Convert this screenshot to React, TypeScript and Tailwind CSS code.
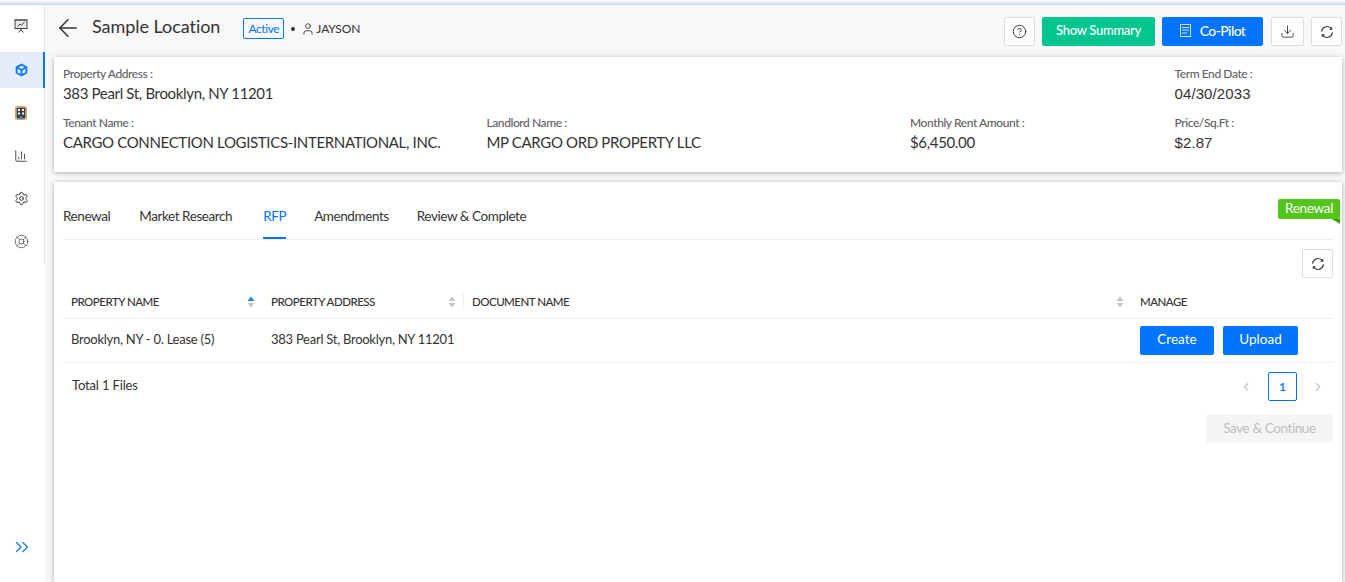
import { ArrowLeft, BarChart3, ChevronLeft, ChevronRight, ChevronsRight, CircleHelp, Download, LifeBuoy, Settings, User } from 'lucide-react'

function Field({ label, value, arial }: { label: string; value: string; arial?: boolean }) {
  return (
    <div>
      <div className="text-[12px] leading-[16px] font-medium tracking-[-0.42px] text-[#5f5f66]">{label}</div>
      <div className={`mt-[1px] text-[15px] leading-[20px] text-[#333] ${arial ? "translate-y-px font-['Liberation_Sans',sans-serif] tracking-[0.1px]" : 'tracking-[-0.34px]'}`}>{value}</div>
    </div>
  )
}

function IconBox({ children, className }: { children: React.ReactNode; className: string }) {
  return <button className={`flex h-[29px] items-center justify-center rounded-[2px] border border-[#ddd] bg-white text-[#333] ${className}`}>{children}</button>
}

function SortIcon({ active }: { active?: boolean }) {
  return (
    <svg width="8" height="12" viewBox="0 0 8 12" className="shrink-0">
      <path d="M4 0.5 L7.5 5 H0.5 Z" fill={active ? '#1a86f0' : '#c4c4c4'} />
      <path d="M4 11.5 L7.5 7 H0.5 Z" fill="#c4c4c4" />
    </svg>
  )
}

function SyncIcon() {
  return (
    <svg width="14" height="14" viewBox="0 0 14 14" fill="none" stroke="#333" strokeWidth="1.1">
      <path d="M1.6 6.6A5.4 5.4 0 0 1 10.8 3.2" />
      <path d="M12.4 7.4A5.4 5.4 0 0 1 3.2 10.8" />
      <path d="M12.2 1.6V4.8H9Z" fill="#333" stroke="none" />
      <path d="M1.8 12.4V9.2H5Z" fill="#333" stroke="none" />
    </svg>
  )
}

function Sidebar() {
  return (
    <aside className="flex w-[45px] shrink-0 flex-col bg-white">
      <div className="flex h-[259px] flex-col border-r border-[#e8e8e8] pr-[2px]">
        <div className="flex h-[47px] items-center justify-center pb-[5px] text-[#444]">
          <svg width="14" height="14" viewBox="0 0 14 14" fill="none" stroke="#444" strokeWidth="1">
            <rect x="1" y="1" width="12" height="8.5" fill="#e9e9e9" />
            <path d="M0.5 1H13.5M3.5 7.5L6 5L7.5 6.2L10.5 3" />
            <path d="M7 9.5V11.5M7 11L4.5 13.5M7 11L9.5 13.5" />
          </svg>
        </div>
        <div className="-mr-[3px] flex h-[36px] items-center justify-center border-r-2 border-[#0073ff] bg-[#e3ecf8] pr-[1px] text-[#0f7cf5]">
          <svg width="13" height="14" viewBox="0 0 14 14" fill="none" stroke="currentColor" strokeWidth="2">
            <path d="M7 1.2 L12.3 4 V10 L7 12.8 L1.7 10 V4 Z M1.7 4 L7 7 L12.3 4 M7 7 V12.8" />
          </svg>
        </div>
        <div className="mt-[3px] flex h-[43px] items-center justify-center">
          <svg width="12" height="14" viewBox="0 0 12 14">
            <rect x="0.5" y="0.5" width="11" height="13" rx="1" fill="#f7f7f7" stroke="#e0a15a" />
            <rect x="1.5" y="1.5" width="9" height="11" fill="#3a3a3a" />
            <path d="M3 3h2v2H3zM7 3h2v2H7zM3 6.5h2v2H3zM7 6.5h2v2H7z" fill="#fff" />
            <rect x="4.5" y="10" width="3" height="3" fill="#2b7de0" />
          </svg>
        </div>
        <div className="flex h-[43px] items-center justify-center text-[#444]">
          <BarChart3 size={14} strokeWidth={1.6} />
        </div>
        <div className="flex h-[43px] items-center justify-center text-[#333]">
          <Settings size={15} strokeWidth={1.6} />
        </div>
        <div className="flex h-[43px] items-center justify-center text-[#555]">
          <LifeBuoy size={15} strokeWidth={1.3} />
        </div>
      </div>
      <div className="mt-auto flex h-[46px] items-start justify-center pr-[1px] text-[#1f7fe8]">
        <ChevronsRight size={22} strokeWidth={1.5} />
      </div>
    </aside>
  )
}

export default function App() {
  return (
    <div className="flex h-[582px] w-[1345px] flex-col overflow-hidden bg-[#f8f8f8] font-['Lato',sans-serif] text-[#333]">
      <div className="h-[5px] shrink-0 bg-gradient-to-b from-[#ffffff] to-[#c9d4e8]" />
      <div className="flex min-h-0 flex-1">
        <Sidebar />
        <main className="flex min-w-0 flex-1 flex-col pl-[9px]">
          <header className="flex h-[52px] shrink-0 items-start pr-[3px]">
            <ArrowLeft size={28} strokeWidth={1.3} className="mt-[9px] text-[#333]" />
            <h1 className="mt-[9px] ml-[10px] text-[18px] leading-[24px] tracking-[-0.05px]">Sample Location</h1>
            <span className="mt-[13px] ml-[23px] flex h-[21px] w-[41px] items-center justify-center rounded-[2px] border border-[#0073ff] text-[12px] tracking-[-0.4px] text-[#0073ff]">Active</span>
            <span className="mt-[22px] ml-[7px] h-[4px] w-[4px] rounded-full bg-[#333]" />
            <User size={14} strokeWidth={1.5} className="mt-[17px] ml-[6px]" />
            <span className="mt-[15px] ml-[1px] text-[12px] leading-[18px] tracking-[-0.15px]">JAYSON</span>
            <div className="mt-[12px] ml-auto flex items-center">
              <IconBox className="w-[31px]"><CircleHelp size={15} strokeWidth={1.5} /></IconBox>
              <button className="ml-[7px] h-[29px] w-[113px] rounded-[2px] bg-[#00c58f] pb-[2px] text-[13px] font-medium tracking-[-0.3px] text-white">Show Summary</button>
              <button className="ml-[7px] flex h-[29px] w-[101px] items-center justify-center gap-[9px] rounded-[2px] bg-[#0073ff] pb-[2px] text-[14px] font-medium tracking-[-0.6px] text-white">
                <svg width="11" height="13" viewBox="0 0 11 13" fill="none" stroke="#cfe3ff" strokeWidth="1">
                  <rect x="0.5" y="0.5" width="10" height="12" />
                  <path d="M2 3.5h7M2 6h7M2 9h5" />
                </svg>
                Co-Pilot
              </button>
              <IconBox className="ml-[8px] w-[33px]"><Download size={15} strokeWidth={1.4} /></IconBox>
              <IconBox className="ml-[7px] w-[31px]"><SyncIcon /></IconBox>
            </div>
          </header>

          <section className="mr-[3px] grid h-[115px] shrink-0 grid-cols-[423.5px_423.5px_264.5px_1fr] content-start gap-y-[12px] bg-white px-[9px] pt-[9px] shadow-[0_1px_5px_rgba(0,0,0,0.3)]">
            <div className="col-span-3"><Field label="Property Address :" value="383 Pearl St, Brooklyn, NY 11201" /></div>
            <Field label="Term End Date :" value="04/30/2033" arial />
            <Field label="Tenant Name :" value="CARGO CONNECTION LOGISTICS-INTERNATIONAL, INC." />
            <Field label="Landlord Name :" value="MP CARGO ORD PROPERTY LLC" />
            <Field label="Monthly Rent Amount :" value="$6,450.00" />
            <Field label="Price/Sq.Ft :" value="$2.87" arial />
          </section>

          <section className="relative mt-[10px] mr-[3px] min-h-0 flex-1 bg-white px-[9px] shadow-[0_1px_5px_rgba(0,0,0,0.3)]">
            <div className="absolute top-[17px] right-[2px]">
              <div className="flex h-[20px] w-[62px] items-center justify-center rounded-[2px] bg-[#52c41a] text-[13.5px] leading-none tracking-[-0.3px] text-white">Renewal</div>
              <div className="ml-auto h-0 w-0 border-t-[5px] border-l-[8px] border-t-[#389e0d] border-l-transparent" />
            </div>

            <nav className="flex h-[58px] items-end border-b border-[#eee] text-[13.5px] tracking-[-0.42px]">
              <a className="mr-[29px] pb-[14px] leading-[18px]">Renewal</a>
              <a className="mr-[31px] pb-[14px] leading-[18px]">Market Research</a>
              <a className="mr-[28px] border-b-2 border-[#0073ff] pb-[12px] leading-[18px] text-[#0073ff]">RFP</a>
              <a className="mr-[28px] pb-[14px] leading-[18px]">Amendments</a>
              <a className="pb-[14px] leading-[18px]">Review &amp; Complete</a>
            </nav>

            <div className="flex h-[43px] items-start justify-end pt-[9px]">
              <IconBox className="w-[31px]"><SyncIcon /></IconBox>
            </div>

            <div className="grid h-[36px] grid-cols-[200px_200px_669px_1fr] items-center border-b border-[#eee] pt-[2px] text-[11.5px] font-medium tracking-[-0.5px]">
              <div className="flex items-center justify-between pr-[8px] pl-[8px]">PROPERTY NAME<SortIcon active /></div>
              <div className="flex items-center justify-between pr-[7px] pl-[8px]">PROPERTY ADDRESS<SortIcon /></div>
              <div className="flex items-center justify-between border-l border-[#eee] pr-[8px] pl-[8px]">DOCUMENT NAME<SortIcon /></div>
              <div className="pl-[8px]">MANAGE</div>
            </div>

            <div className="grid h-[44px] grid-cols-[200px_869px_1fr] items-center border-b border-[#eee] text-[13px] tracking-[-0.26px]">
              <div className="pb-[2px] pl-[8px]">Brooklyn, NY - 0. Lease (5)</div>
              <div className="pb-[2px] pl-[8px]">383 Pearl St, Brooklyn, NY 11201</div>
              <div className="flex gap-[9px] pl-[8px] tracking-normal">
                <button className="h-[29px] w-[74px] rounded-[2px] bg-[#0073ff] pb-[2px] text-[13.5px] text-white">Create</button>
                <button className="h-[29px] w-[75px] rounded-[2px] bg-[#0073ff] pb-[2px] text-[13.5px] text-white">Upload</button>
              </div>
            </div>

            <div className="flex h-[46px] items-center justify-between pl-[9px]">
              <span className="text-[13px] tracking-[-0.15px]">Total 1 Files</span>
              <div className="flex items-center pt-[1px] pr-[8px]">
                <ChevronLeft size={14} className="text-[#c4c4c4]" />
                <span className="ml-[15px] flex h-[29px] w-[29px] items-center justify-center rounded-[2px] border border-[#0073ff] text-[12px] font-semibold text-[#0073ff]">1</span>
                <ChevronRight size={14} className="ml-[14px] text-[#c4c4c4]" />
              </div>
            </div>

            <div className="mt-[5px] flex justify-end">
              <button className="h-[29px] w-[127px] rounded-[2px] bg-[#f5f5f5] text-[13.5px] tracking-[-0.4px] text-[#bdbdbd]">Save &amp; Continue</button>
            </div>
          </section>
        </main>
      </div>
    </div>
  )
}
